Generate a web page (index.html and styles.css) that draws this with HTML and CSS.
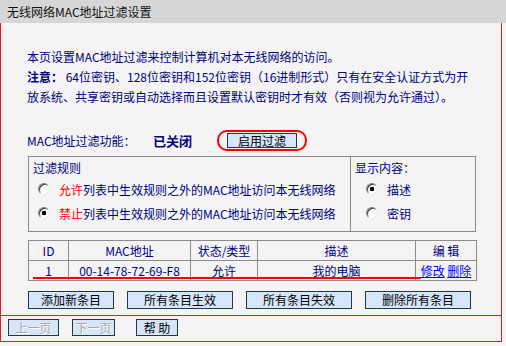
FILE: index.html
```html
<!DOCTYPE html>
<html>
<head>
<meta charset="utf-8">
<title>无线网络MAC地址过滤设置</title>
<link rel="stylesheet" href="styles.css">
</head>
<body>

<div class="title">无线网络MAC地址过滤设置</div>

<div class="panel">
	<div class="main">
		<p class="intro">本页设置MAC地址过滤来控制计算机对本无线网络的访问。<br>
		<b>注意：</b> 64位密钥、128位密钥和152位密钥（16进制形式）只有在安全认证方式为开<br>
		放系统、共享密钥或自动选择而且设置默认密钥时才有效（否则视为允许通过）。</p>

		<div class="status">
			<span class="label">MAC地址过滤功能：</span>
			<span class="state">已关闭</span>
			<span class="mark"><span class="btn btn-on">启用过滤</span></span>
		</div>

		<div class="rules">
			<div class="rule-col">
				<div class="head">过滤规则</div>
				<div class="opt"><span class="radio"></span><span><em>允许</em>列表中生效规则之外的MAC地址访问本无线网络</span></div>
				<div class="opt"><span class="radio on"></span><span><em>禁止</em>列表中生效规则之外的MAC地址访问本无线网络</span></div>
			</div>
			<div class="show-col">
				<div class="head">显示内容：</div>
				<div class="opt"><span class="radio on"></span><span>描述</span></div>
				<div class="opt"><span class="radio"></span><span>密钥</span></div>
			</div>
		</div>

		<div class="list">
			<table>
				<colgroup><col class="c-id"><col class="c-mac"><col class="c-type"><col class="c-desc"><col class="c-edit"></colgroup>
				<tr><th>ID</th><th>MAC地址</th><th>状态/类型</th><th>描述</th><th>编 辑</th></tr>
				<tr><td>1</td><td>00-14-78-72-69-F8</td><td>允许</td><td>我的电脑</td><td><a href="#">修改</a> <a href="#">删除</a></td></tr>
			</table>
			<div class="underline"></div>
		</div>

		<div class="actions">
			<span class="btn w86">添加新条目</span>
			<span class="btn w106">所有条目生效</span>
			<span class="btn w106">所有条目失效</span>
			<span class="btn w106">删除所有条目</span>
		</div>
	</div>

	<div class="footer">
		<span class="btn off w51">上一页</span>
		<span class="btn off w43">下一页</span>
		<span class="btn help w42">帮 助</span>
	</div>
</div>

</body>
</html>
```

FILE: styles.css
```css
body {
	margin: 0;
	background: #f4f4f4;
	font-family: "Noto Sans CJK SC", "DejaVu Sans", sans-serif;
	font-size: 12px;
	color: #000080;
}

.title {
	height: 23px;
	line-height: 23px;
	background: #d6d6d6;
	color: #111;
	padding-left: 7px;
	font-size: 12px;
}

.panel {
	width: 502px;
	box-sizing: border-box;
	border: 1px solid #e02020;
	border-top: none;
}

.main {
	padding: 24px 0 6px 26px;
}

.intro {
	margin: 0;
	line-height: 20px;
}
.intro b { font-weight: bold; }

.status {
	display: flex;
	align-items: center;
	height: 21px;
	margin-top: 23px;
}
.status .label { width: 126px; }
.status .state { width: 64px; font-weight: bold; font-size: 13px; }
.mark {
	display: inline-block;
	border: 2px solid #ff0000;
	border-radius: 10px;
	padding: 1px 8px;
	line-height: 0;
}

.btn {
	display: inline-flex;
	align-items: center;
	justify-content: center;
	box-sizing: border-box;
	height: 18px;
	background: #d6e5fa;
	border: 1px solid #1e3c3c;
	color: #000;
	font-size: 12px;
	line-height: 1;
	white-space: nowrap;
}
.btn-on { width: 70px; height: 15px; }
.btn.off { color: #a8a8a8; text-shadow: 1px 1px 0 #fff; }
.w86 { width: 86px; }
.w106 { width: 106px; }
.w51 { width: 51px; }
.w43 { width: 43px; }
.w42 { width: 42px; }

.rules {
	display: grid;
	grid-template-columns: 321px 126px;
	width: 448px;
	box-sizing: border-box;
	margin: 5px 0 0 1px;
	border: 1px solid #888;
	height: 76px;
}
.rule-col { padding: 2px 0 0 4px; }
.show-col { padding: 2px 0 0 4px; border-left: 1px solid #888; }
.head { line-height: 18px; height: 18px; }
.opt {
	display: flex;
	align-items: center;
	gap: 9px;
	height: 24px;
	padding-left: 5px;
	white-space: nowrap;
}
.show-col .opt { padding-left: 11px; }
.opt em { font-style: normal; color: #ff0000; }

.radio {
	width: 12px;
	height: 12px;
	box-sizing: border-box;
	border-radius: 50%;
	border: 1px solid;
	border-color: #808080 #e8e8e8 #e8e8e8 #808080;
	box-shadow: inset 1px 1px 0 #404040;
	background: #fff;
	flex: none;
}
.radio.on { background: radial-gradient(circle, #000 0 2px, #fff 2.6px); }

.list {
	position: relative;
	margin: 8px 0 0 1px;
	width: 448px;
}
.list table {
	border-collapse: collapse;
	width: 448px;
	table-layout: fixed;
}
.list th, .list td {
	border: 1px solid #8c8c8c;
	height: 19px;
	padding: 0;
	text-align: center;
	font-weight: normal;
	line-height: 19px;
	white-space: nowrap;
	overflow: hidden;
}
.c-id { width: 40px; }
.c-mac { width: 122px; }
.c-type { width: 67px; }
.c-desc { width: 158px; }
.c-edit { width: 61px; }
.list a { color: #0000ff; }

/* red mark over the selected row */
.underline {
	position: absolute;
	left: 5px;
	top: 37px;
	width: 388px;
	height: 2px;
	background: #ff0000;
}

.actions {
	display: flex;
	gap: 13px;
	margin: 10px 0 0 1px;
}

.footer {
	border-top: 1px solid #e02020;
	display: flex;
	gap: 13px;
	padding: 3px 0 5px 7px;
}
.footer .btn { height: 17px; }
.footer .help { margin-left: 8px; }
```
